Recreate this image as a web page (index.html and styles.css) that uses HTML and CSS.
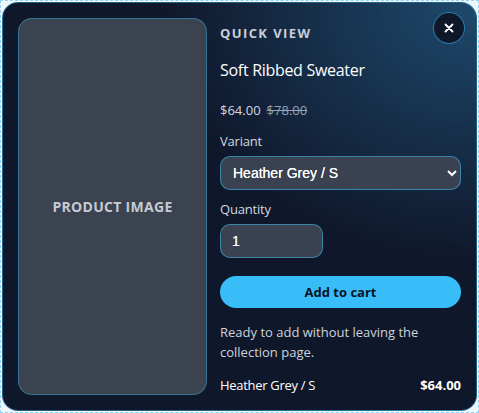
FILE: index.html
```html
<!DOCTYPE html>
<html lang="en">
<head>
<meta charset="utf-8">
<title>Quick view</title>
<link rel="stylesheet" href="styles.css">
</head>
<body>
<div class="frame">
  <div class="dialog">
    <div class="media">PRODUCT IMAGE</div>
    <div class="details">
      <div class="eyebrow">QUICK VIEW</div>
      <h2 class="title">Soft Ribbed Sweater</h2>
      <div class="prices"><span class="now">$64.00</span><s class="was">$78.00</s></div>
      <label class="field">
        <span class="label">Variant</span>
        <select class="select">
          <option>Heather Grey / S</option>
          <option>Heather Grey / M</option>
        </select>
      </label>
      <label class="field field-qty">
        <span class="label">Quantity</span>
        <input class="qty" type="text" value="1">
      </label>
      <button class="add" type="button">Add to cart</button>
      <p class="note">Ready to add without leaving the collection page.</p>
      <div class="summary"><span class="sum-name">Heather Grey / S</span><strong>$64.00</strong></div>
    </div>
    <button class="close" type="button" aria-label="Close">
      <svg width="10" height="10" viewBox="0 0 10 10"><path d="M1.5 1.5 L8.5 8.5 M8.5 1.5 L1.5 8.5" stroke="#fff" stroke-width="1.8" stroke-linecap="round"/></svg>
    </button>
  </div>
</div>
</body>
</html>
```
FILE: styles.css
```css
* { box-sizing: border-box; }
html, body { margin: 0; padding: 0; background: #eef7fc; }
body { font-family: "Open Sans", "Noto Sans", sans-serif; }

.frame {
  width: 479px;
  height: 413px;
  border: 1px dashed #8fd3f5;
  padding: 1px;
}

.dialog {
  position: relative;
  height: 409px;
  border: 1px solid rgba(56, 189, 248, 0.45);
  border-radius: 16px;
  padding: 15px;
  background:
    radial-gradient(ellipse 320px 260px at 100% 0%, rgba(35, 90, 130, 0.75), rgba(15, 23, 42, 0) 100%),
    #0f172a;
  display: grid;
  grid-template-columns: 189px 1fr;
  column-gap: 13px;
  color: #fff;
}

.media {
  background: #3b4250;
  border: 1px solid rgba(56, 189, 248, 0.4);
  border-radius: 14px;
  display: flex;
  align-items: center;
  justify-content: center;
  font-weight: 700;
  font-size: 14px;
  letter-spacing: 0.3px;
  color: #c5cad3;
  height: 377px;
}

.details {
  display: flex;
  flex-direction: column;
  padding-top: 6px;
}

.eyebrow {
  font-size: 13px;
  font-weight: 700;
  letter-spacing: 1.4px;
  line-height: 18px;
  color: #c8d0dc;
}

.title {
  margin: 16px 0 0;
  font-size: 16px;
  font-weight: 400;
  letter-spacing: -0.3px;
  line-height: 24px;
  color: #fff;
}

.prices {
  margin-top: 19px;
  font-size: 13px;
  line-height: 18px;
  display: flex;
  gap: 6px;
  color: #d3d8e0;
}
.was { color: #94a3b8; }

.field {
  display: flex;
  flex-direction: column;
  gap: 6px;
  margin-top: 13px;
}
.field-qty { margin-top: 10px; }
.label {
  font-size: 13px;
  line-height: 18px;
  letter-spacing: -0.2px;
  color: #d3d8e0;
}

.select, .qty {
  height: 34px;
  border: 1px solid rgba(56, 189, 248, 0.55);
  border-radius: 10px;
  background: #3a4150;
  color: #fff;
  font-family: "Liberation Sans", Arial, sans-serif;
  font-size: 14px;
  font-weight: 400;
  padding: 0 11px;
  outline: none;
  text-shadow: 0 0 0.4px #fff;
}
.select { width: 241px; padding-left: 8px; }
.qty { width: 103px; }

.add {
  margin-top: 18px;
  height: 32px;
  border: none;
  border-radius: 16px;
  background: #38bdf8;
  color: #0b1324;
  font-family: inherit;
  font-size: 13px;
  font-weight: 700;
}

.note {
  margin: 14px 0 0;
  font-size: 13px;
  line-height: 20px;
  color: #cdd3dc;
}

.summary {
  margin-top: 14px;
  display: flex;
  justify-content: space-between;
  font-size: 13px;
  line-height: 18px;
  color: #fff;
}
.sum-name { letter-spacing: -0.3px; }

.close {
  position: absolute;
  top: 9px;
  right: 11px;
  width: 32px;
  height: 32px;
  border-radius: 50%;
  background: #0f172a;
  border: 1px solid rgba(56, 189, 248, 0.6);
  display: flex;
  align-items: center;
  justify-content: center;
  padding: 0;
}
```
